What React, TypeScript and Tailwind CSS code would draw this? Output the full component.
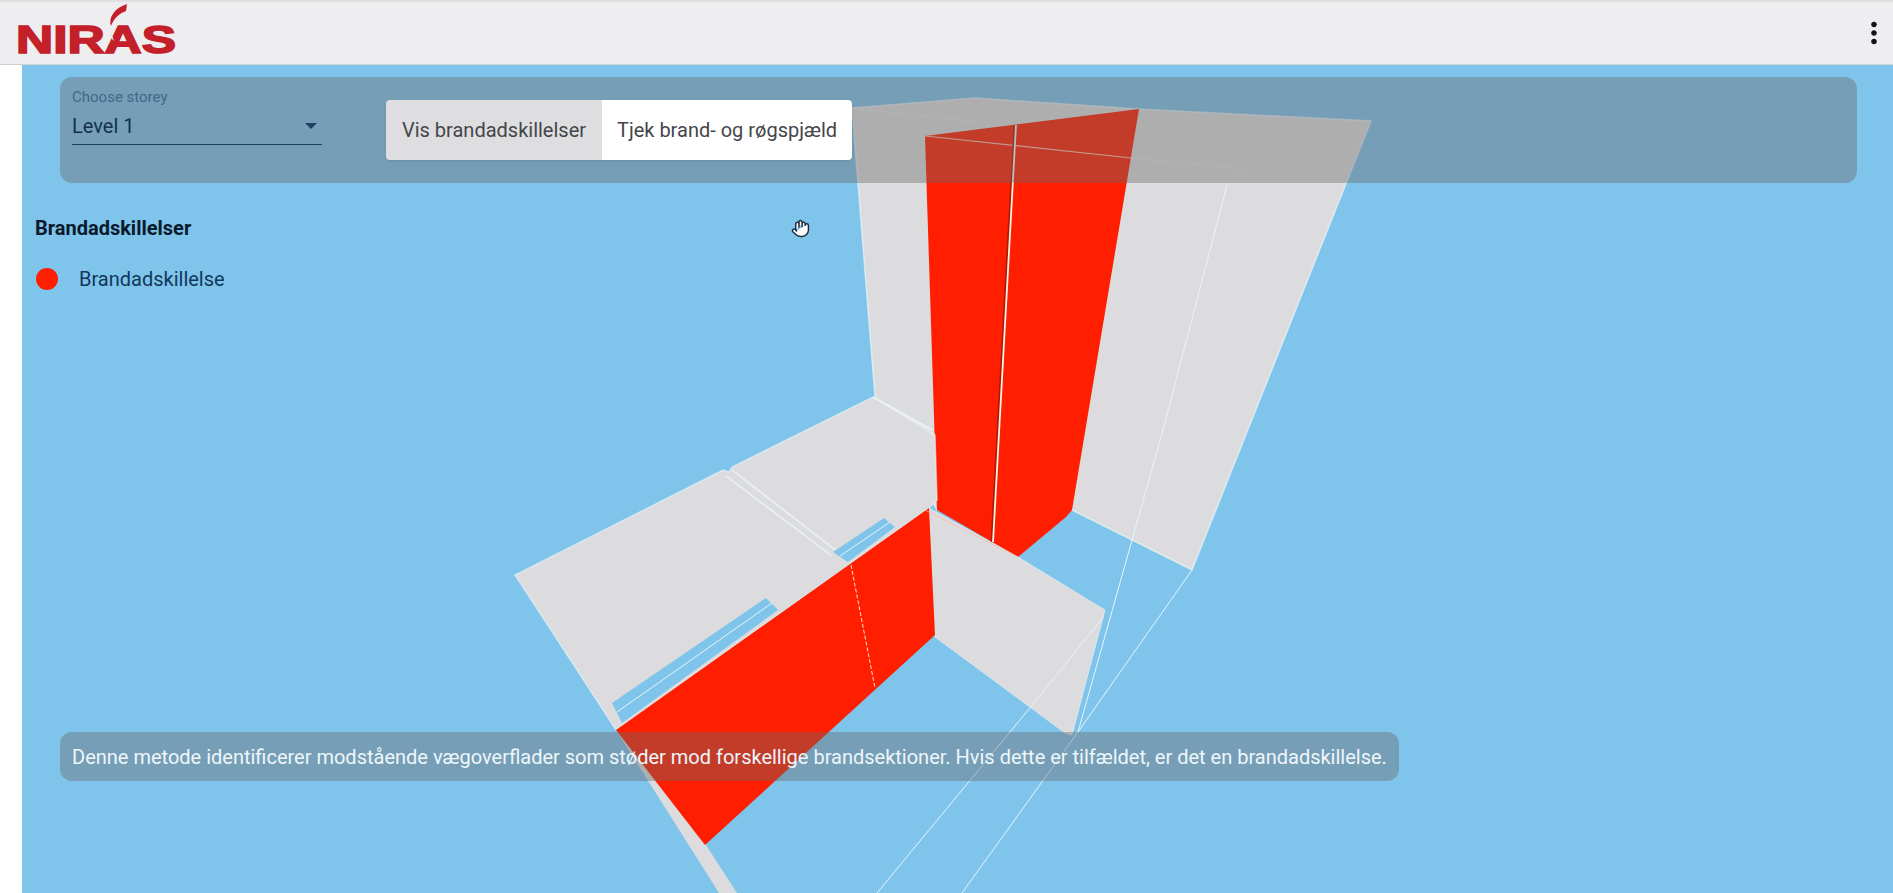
import { Hand } from 'lucide-react'

const sky = '#7fc4eb'
const wall = '#dcdcde'
const red = '#ff1e00'
const edge = '#e9f3f9'

function Logo() {
	return (
		<svg width="190" height="64" viewBox="0 0 190 64" className="shrink-0">
			<text
				x="16"
				y="52"
				fontFamily="'Liberation Sans', sans-serif"
				fontWeight="700"
				fontSize="38"
				textLength="160"
				lengthAdjust="spacingAndGlyphs"
				fill="#c4202a"
				stroke="#c4202a"
				strokeWidth="1.6"
			>
				NIRAS
			</text>
			<path d="M127 3 C115 7 108 16 111 25 C114 17 120 12 126 10 Z" fill="#c4202a" />
			<path d="M108 24 C106 30 110 36 114 40 C112 34 110 29 108 24 Z" fill="#eeeef0" />
		</svg>
	)
}

function Model() {
	return (
		<svg viewBox="22 65 1871 828" className="absolute inset-0 h-full w-full">
			{/* back walls */}
			<polygon
				points="852,108 975,98 1138,109 1371,121 1192,570 1072,510 937,510 875,397"
				fill={wall}
				stroke={edge}
				strokeOpacity="0.7"
				strokeWidth="1.5"
			/>
			<polyline points="852,108 979,122" stroke="#e6e6e8" strokeWidth="1" fill="none" />
			<polyline points="1131,158 1245,169" stroke="#e6e6e8" strokeWidth="1" fill="none" />
			<polygon points="925,136 1139,109 1072,510 1066,517 1018,557 937,510" fill={red} />
			<polyline points="925,136 1131,158" stroke="#ffb9a8" strokeWidth="1.2" fill="none" />
			<polyline points="1015,125 992,542" stroke="#a81a08" strokeWidth="3" fill="none" />
			<polyline points="1016,125 993,542" stroke="#fff3e6" strokeWidth="1.8" fill="none" />

			{/* floor slabs */}
			<polygon
				points="723,470 515,575 616,730 929,508 937,500 935,435 873,397 732,467 729,472"
				fill={wall}
				stroke={edge}
				strokeOpacity="0.6"
				strokeWidth="1.5"
			/>
			<polyline points="873,397 932,430" stroke={edge} strokeWidth="2" fill="none" />
			<polyline points="732,470 838,552" stroke={edge} strokeWidth="1.5" fill="none" />
			<polyline points="726,476 832,556" stroke={edge} strokeWidth="1.5" fill="none" />
			<polygon points="612,703 766,598 778,610 622,723" fill={sky} />
			<polyline points="617,712 772,603" stroke={edge} strokeWidth="1" fill="none" />
			<polygon points="833,552 884,518 895,527 848,562" fill={sky} />
			<polyline points="840,556 890,522" stroke={edge} strokeWidth="1" fill="none" />
			<polygon points="616,730 706,845 737,893 719,893" fill={wall} />

			{/* front walls */}
			<polygon
				points="929,508 935,637 1065,733 1072,735 1105,610 1018,557"
				fill={wall}
				stroke={edge}
				strokeOpacity="0.6"
				strokeWidth="1"
			/>
			<polygon points="616,730 929,508 935,635 705,845" fill={red} />
			<polyline
				points="851,565 875,688"
				stroke="#ffe9c9"
				strokeWidth="1"
				strokeDasharray="4 2"
				fill="none"
			/>
			<polyline points="925,510 1018,557" stroke="#ffb9a8" strokeWidth="0.8" fill="none" />

			{/* thin lines through the model */}
			<g stroke="#e6f4fc" strokeWidth="1" fill="none">
				<polyline points="1227,185 1163,430 1078,732" />
				<polyline points="1192,570 1078,732 962,893" />
				<polyline points="1104,616 1034,703 877,893" />
			</g>
		</svg>
	)
}

export default function App() {
	return (
		<div className="flex h-[893px] w-[1893px] flex-col overflow-hidden bg-white font-['Roboto',sans-serif]">
			<header className="flex h-[65px] shrink-0 items-center justify-between border-t-2 border-b border-t-[#dfdfe0] border-b-[#cfd0d1] bg-[#eeeef0]">
				<Logo />
				<svg width="34" height="34" viewBox="0 0 24 24" fill="#10141c" className="mr-[2px]">
					<path d="M12 8c1.1 0 2-.9 2-2s-.9-2-2-2-2 .9-2 2 .9 2 2 2zm0 2c-1.1 0-2 .9-2 2s.9 2 2 2 2-.9 2-2-.9-2-2-2zm0 6c-1.1 0-2 .9-2 2s.9 2 2 2 2-.9 2-2-.9-2-2-2z" />
				</svg>
			</header>

			<main className="flex flex-1 pl-[22px]">
				<div className="relative flex-1 overflow-hidden bg-[#7fc4eb]">
					<Model />

					<div className="absolute inset-0 flex flex-col pb-[112px] pl-[38px]">
						<section className="mt-[12px] flex h-[106px] w-[1797px] items-start rounded-[12px] bg-[#696969]/40 pl-[12px]">
							<div className="mt-[12px] w-[250px] border-b border-[#1d4060]">
								<div className="text-[15px] leading-[16px] text-[#3f6a87]">Choose storey</div>
								<div className="flex h-[39px] items-center justify-between pt-[2px] pr-[5px] text-[20px] text-[#12324d]">
									<span>Level 1</span>
									<span className="h-0 w-0 border-x-[6px] border-t-[6px] border-x-transparent border-t-[#1d4060]" />
								</div>
							</div>
							<div className="mt-[23px] ml-[64px] flex h-[60px] overflow-hidden rounded-[4px] text-[20px] text-[#44464a] shadow-sm">
								<div className="flex w-[216px] items-center justify-center bg-[#dedee0]">Vis brandadskillelser</div>
								<div className="flex w-[250px] items-center justify-center bg-white">Tjek brand- og røgspjæld</div>
							</div>
						</section>

						<h2 className="mt-[32px] ml-[-25px] text-[20px] leading-[26px] font-bold text-[#0a1a2c]">Brandadskillelser</h2>
						<div className="mt-[25px] ml-[-24px] flex items-center gap-[21px]">
							<span className="h-[22px] w-[22px] rounded-full bg-[#ff1e00]" />
							<span className="text-[20px] leading-[26px] text-[#11385a]">Brandadskillelse</span>
						</div>

						<div className="mt-auto flex h-[49px] w-[1339px] items-center rounded-[12px] bg-[#696969]/40 pl-[12px] text-[20px] text-[#eef6fa]">
							Denne metode identificerer modstående vægoverflader som støder mod forskellige brandsektioner. Hvis dette er tilfældet, er det en brandadskillelse.
						</div>
					</div>

					<Hand
						size={19}
						fill="#fff"
						stroke="#1c2a38"
						strokeWidth={1.8}
						className="absolute top-[154px] left-[769px]"
					/>
				</div>
			</main>
		</div>
	)
}
